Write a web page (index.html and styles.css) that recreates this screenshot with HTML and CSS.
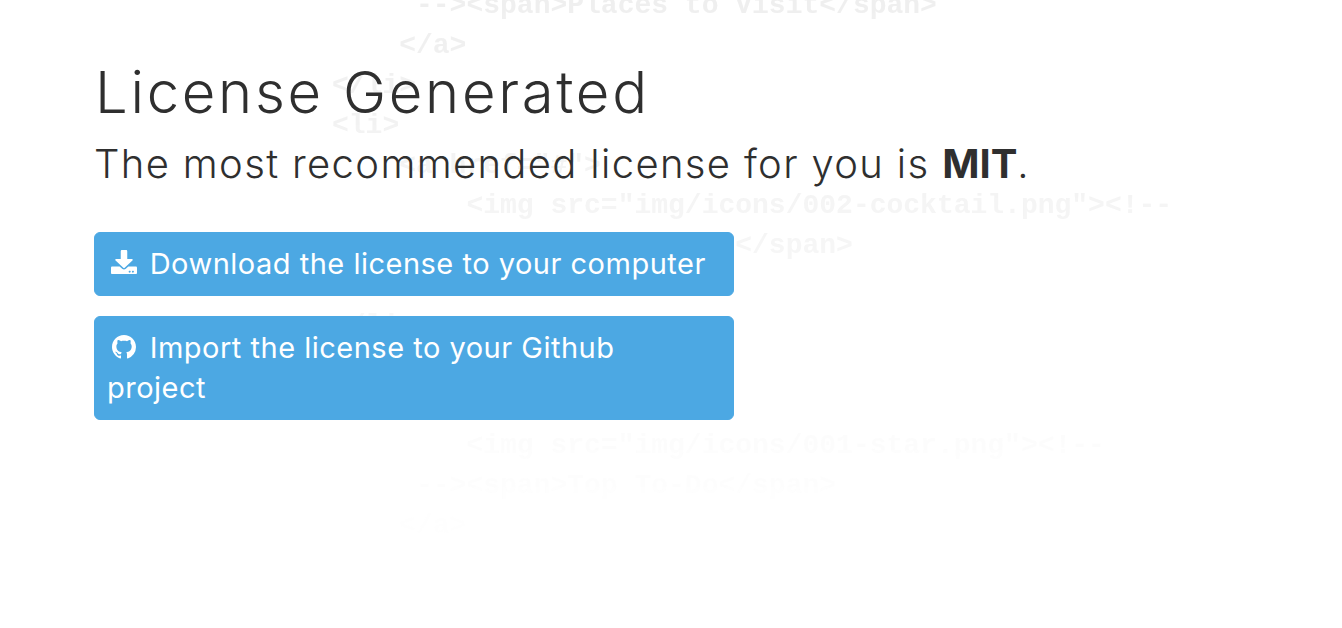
FILE: index.html
```html
<!DOCTYPE html>
<html lang="en">
<head>
    <meta charset="UTF-8">
    <title>License Generated</title>
    <link rel="stylesheet" href="styles.css">
</head>
<body>
    <pre class="code-bg" aria-hidden="true">     --&gt;&lt;span&gt;Places to Visit&lt;/span&gt;
    &lt;/a&gt;
&lt;/li&gt;
&lt;li&gt;
    &lt;a href="#"&gt;
        &lt;img src="img/icons/002-cocktail.png"&gt;&lt;!--
     --&gt;&lt;span&gt;Bars to Go&lt;/span&gt;
    &lt;/a&gt;
&lt;/li&gt;
&lt;li&gt;
    &lt;a href="#"&gt;
        &lt;img src="img/icons/001-star.png"&gt;&lt;!--
     --&gt;&lt;span&gt;Top To-Do&lt;/span&gt;
    &lt;/a&gt;</pre>

    <div class="content">
        <h1>License Generated</h1>
        <p class="lead">The most recommended license for you is <strong>MIT</strong>.</p>

        <div class="actions">
            <a class="btn" href="#">
                <svg class="icon icon-download" viewBox="0 0 512 512" preserveAspectRatio="none"><path d="M216 0h80c13.3 0 24 10.7 24 24v168h87.7c17.8 0 26.7 21.5 14.1 34.1L269.7 378.3c-7.5 7.5-19.8 7.5-27.3 0L90.1 226.1c-12.6-12.6-3.7-34.1 14.1-34.1H192V24c0-13.3 10.7-24 24-24zm296 376v112c0 13.3-10.7 24-24 24H24c-13.3 0-24-10.7-24-24V376c0-13.3 10.7-24 24-24h146.7l49 49c20.1 20.1 52.5 20.1 72.6 0l49-49H488c13.3 0 24 10.7 24 24zm-124 88c0-11-9-20-20-20s-20 9-20 20 9 20 20 20 20-9 20-20zm64 0c0-11-9-20-20-20s-20 9-20 20 9 20 20 20 20-9 20-20z"/></svg>
                Download the license to your computer
            </a>
            <a class="btn" href="#">
                <svg class="icon icon-github" viewBox="0 0 16 16"><path d="M8 0C3.58 0 0 3.58 0 8c0 3.54 2.29 6.53 5.47 7.59.4.07.55-.17.55-.38 0-.19-.01-.82-.01-1.49-2.01.37-2.53-.49-2.69-.94-.09-.23-.48-.94-.82-1.13-.28-.15-.68-.52-.01-.53.63-.01 1.08.58 1.23.82.72 1.21 1.87.87 2.33.66.07-.52.28-.87.51-1.07-1.78-.2-3.64-.89-3.64-3.95 0-.87.31-1.59.82-2.15-.08-.2-.36-1.02.08-2.12 0 0 .67-.21 2.2.82.64-.18 1.32-.27 2-.27.68 0 1.36.09 2 .27 1.53-1.04 2.2-.82 2.2-.82.44 1.1.16 1.92.08 2.12.51.56.82 1.27.82 2.15 0 3.07-1.87 3.75-3.65 3.95.29.25.54.73.54 1.48 0 1.07-.01 1.93-.01 2.2 0 .21.15.46.55.38A8.013 8.013 0 0016 8c0-4.42-3.58-8-8-8z"/></svg>
                Import the license to your Github<br>project
            </a>
        </div>
    </div>
</body>
</html>
```

FILE: styles.css
```css
* {
    margin: 0;
    padding: 0;
    box-sizing: border-box;
}

html, body {
    height: 100%;
    overflow: hidden;
}

body {
    position: relative;
    font-family: "Inter", "Liberation Sans", sans-serif;
    color: #2f2f2f;
    background: white;
}

.code-bg {
    position: absolute;
    top: -14px;
    left: 332px;
    font-family: "Liberation Mono", monospace;
    font-size: 28px;
    font-weight: bold;
    line-height: 40px;
    color: #e6e6e6;
    -webkit-mask-image: linear-gradient(to bottom, rgba(0,0,0,0.65) 0, rgba(0,0,0,0.38) 250px, rgba(0,0,0,0.08) 480px, rgba(0,0,0,0.02) 550px);
    mask-image: linear-gradient(to bottom, rgba(0,0,0,0.65) 0, rgba(0,0,0,0.38) 250px, rgba(0,0,0,0.08) 480px, rgba(0,0,0,0.02) 550px);
}

.content {
    position: relative;
    width: 640px;
    margin-left: 94px;
    padding-top: 56px;
}

h1 {
    font-size: 58px;
    font-weight: 300;
    line-height: 72px;
    letter-spacing: 2.7px;
    white-space: nowrap;
    margin-left: 1px;
}

.lead {
    font-size: 40px;
    font-weight: 350;
    line-height: 48px;
    letter-spacing: 1.35px;
    white-space: nowrap;
    margin-top: 12px;
    margin-bottom: 44px;
}

.lead strong {
    font-weight: 700;
    letter-spacing: 0;
}

.actions {
    display: flex;
    flex-direction: column;
    gap: 20px;
}

.btn {
    display: block;
    padding: 11px 12px;
    border: 1px solid #4ca8e3;
    background: #4ca8e3;
    color: white;
    border-radius: 6px;
    font-size: 29px;
    font-weight: 400;
    line-height: 40px;
    letter-spacing: 0.5px;
    text-decoration: none;
}

.icon {
    fill: white;
}

.icon-download {
    width: 26px;
    height: 24px;
    margin: 0 4px;
    vertical-align: 0;
}

.icon-github {
    width: 24px;
    height: 24px;
    margin: 0 5px;
    vertical-align: -1px;
}
```
